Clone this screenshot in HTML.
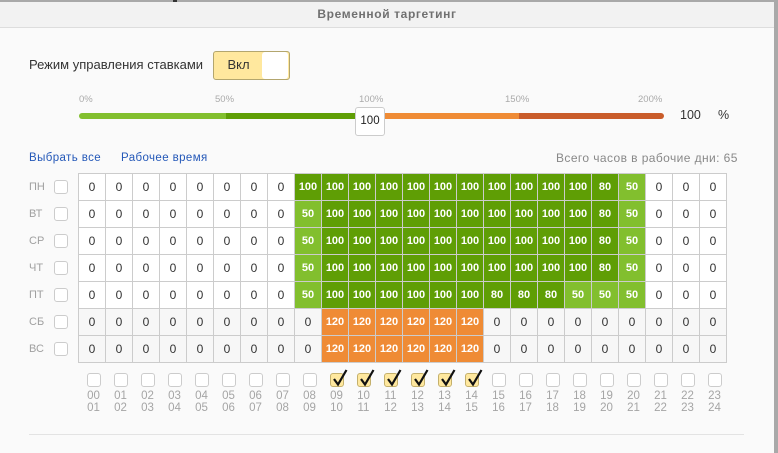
<!DOCTYPE html>
<html lang="ru"><head><meta charset="utf-8"><title>Временной таргетинг</title>
<style>
html,body{margin:0;padding:0}
body{width:778px;height:453px;overflow:hidden;position:relative;background:#a9a9a9;font-family:"Liberation Sans",Arial,sans-serif}
div,span,a{position:absolute;display:block;white-space:nowrap}
#m{left:0;top:2px;width:774px;height:451px;background:#fafafa}
#h{left:0;top:2px;width:774px;height:25px;background:#f2f2f2;border-bottom:1px solid #ddd;text-align:center;font:bold 12px/25px "Liberation Sans",sans-serif;color:#707070;letter-spacing:.62px}
.pl{top:94px;font-size:9.5px;line-height:11px;color:#aaa}
.seg{top:113px;height:6px}
table{position:absolute;left:78px;top:173px;border-collapse:collapse;table-layout:fixed;width:649px}
td{width:26px;height:26px;padding:0;border:1px solid #ccc;background:#fff;text-align:center;font:normal 12px/26px "Liberation Sans",sans-serif;color:#333}
tr.w td{background:#f7f7f7}
td.l,tr.w td.l{background:#82bf2e;color:#fff;font:bold 11px/26px "Liberation Sans",sans-serif}
td.g,tr.w td.g{background:#5f9e05;color:#fff;font:bold 11px/26px "Liberation Sans",sans-serif}
td.o,tr.w td.o{background:#ef8b35;color:#fff;font:bold 11px/26px "Liberation Sans",sans-serif}
.dl{left:29px;font-size:11px;line-height:13px;color:#a0a0a0}
.cb{width:12px;height:12px;border:1px solid #ccc;border-radius:3px;background:#fff}
.c{background:#ffe89e;border-color:#c4b06c}
.hl{width:27px;text-align:center;font-size:11.500px;line-height:12px;color:#a5a5a5;top:390px;white-space:normal}
svg{position:absolute;overflow:visible}
</style></head><body>
<div style="left:173px;top:0;width:4px;height:2px;background:#333"></div>
<div id="m"></div>
<div id="h">Временной таргетинг</div>

<div style="left:29px;top:57px;font-size:13px;line-height:15px;color:#333">Режим управления ставками</div>
<div style="left:213px;top:51px;width:75px;height:27px;border:1px solid #b3a66e;border-radius:3px;background:#ffe89e"></div>
<div style="left:215px;top:51px;width:47px;height:27px;text-align:center;font-size:13px;line-height:27px;color:#333">Вкл</div>
<div style="left:262px;top:52px;width:26px;height:27px;background:#fff;border-radius:3px"></div>

<div class="pl" style="left:79px">0%</div>
<div class="pl" style="left:215px">50%</div>
<div class="pl" style="left:359px">100%</div>
<div class="pl" style="left:505px">150%</div>
<div class="pl" style="left:638px">200%</div>
<div class="seg" style="left:79px;width:147px;background:#82bf2e;border-radius:3px 0 0 3px"></div>
<div class="seg" style="left:226px;width:144px;background:#5f9e05"></div>
<div class="seg" style="left:370px;width:149px;background:#ef8b35"></div>
<div class="seg" style="left:519px;width:145px;background:#c95c2a;border-radius:0 3px 3px 0"></div>
<div style="left:355px;top:107px;width:28px;height:27px;background:#fff;border:1px solid #ccc;border-radius:3px;text-align:center;font-size:11.500px;line-height:27px;color:#222">100</div>
<div style="left:680px;top:108px;font-size:12.500px;line-height:15px;color:#333">100</div>
<div style="left:718px;top:108px;font-size:12.500px;line-height:15px;color:#333">%</div>

<a style="left:29px;top:151px;font-size:11.500px;line-height:14px;color:#2458b8;letter-spacing:.4px">Выбрать все</a>
<a style="left:121px;top:151px;font-size:11.500px;line-height:14px;color:#2458b8;letter-spacing:.4px">Рабочее время</a>
<div style="left:556px;top:151px;font-size:12px;line-height:14px;color:#888;letter-spacing:.41px">Всего часов в рабочие дни: 65</div>

<div class="dl" style="top:181px">ПН</div><div class="cb" style="left:54px;top:180px"></div>
<div class="dl" style="top:208px">ВТ</div><div class="cb" style="left:54px;top:207px"></div>
<div class="dl" style="top:235px">СР</div><div class="cb" style="left:54px;top:234px"></div>
<div class="dl" style="top:262px">ЧТ</div><div class="cb" style="left:54px;top:261px"></div>
<div class="dl" style="top:289px">ПТ</div><div class="cb" style="left:54px;top:288px"></div>
<div class="dl" style="top:316px">СБ</div><div class="cb" style="left:54px;top:315px"></div>
<div class="dl" style="top:343px">ВС</div><div class="cb" style="left:54px;top:342px"></div>

<table>
<tr><td>0<td>0<td>0<td>0<td>0<td>0<td>0<td>0<td class=g>100<td class=g>100<td class=g>100<td class=g>100<td class=g>100<td class=g>100<td class=g>100<td class=g>100<td class=g>100<td class=g>100<td class=g>100<td class=g>80<td class=l>50<td>0<td>0<td>0</tr>
<tr><td>0<td>0<td>0<td>0<td>0<td>0<td>0<td>0<td class=l>50<td class=g>100<td class=g>100<td class=g>100<td class=g>100<td class=g>100<td class=g>100<td class=g>100<td class=g>100<td class=g>100<td class=g>100<td class=g>80<td class=l>50<td>0<td>0<td>0</tr>
<tr><td>0<td>0<td>0<td>0<td>0<td>0<td>0<td>0<td class=l>50<td class=g>100<td class=g>100<td class=g>100<td class=g>100<td class=g>100<td class=g>100<td class=g>100<td class=g>100<td class=g>100<td class=g>100<td class=g>80<td class=l>50<td>0<td>0<td>0</tr>
<tr><td>0<td>0<td>0<td>0<td>0<td>0<td>0<td>0<td class=l>50<td class=g>100<td class=g>100<td class=g>100<td class=g>100<td class=g>100<td class=g>100<td class=g>100<td class=g>100<td class=g>100<td class=g>100<td class=g>80<td class=l>50<td>0<td>0<td>0</tr>
<tr><td>0<td>0<td>0<td>0<td>0<td>0<td>0<td>0<td class=l>50<td class=g>100<td class=g>100<td class=g>100<td class=g>100<td class=g>100<td class=g>100<td class=g>80<td class=g>80<td class=g>80<td class=l>50<td class=l>50<td class=l>50<td>0<td>0<td>0</tr>
<tr class=w><td>0<td>0<td>0<td>0<td>0<td>0<td>0<td>0<td>0<td class=o>120<td class=o>120<td class=o>120<td class=o>120<td class=o>120<td class=o>120<td>0<td>0<td>0<td>0<td>0<td>0<td>0<td>0<td>0</tr>
<tr class=w><td>0<td>0<td>0<td>0<td>0<td>0<td>0<td>0<td>0<td class=o>120<td class=o>120<td class=o>120<td class=o>120<td class=o>120<td class=o>120<td>0<td>0<td>0<td>0<td>0<td>0<td>0<td>0<td>0</tr>
</table>

<div class="cb" style="left:87px;top:373px"></div><div class="hl" style="left:80px">00<br>01</div>
<div class="cb" style="left:114px;top:373px"></div><div class="hl" style="left:107px">01<br>02</div>
<div class="cb" style="left:141px;top:373px"></div><div class="hl" style="left:134px">02<br>03</div>
<div class="cb" style="left:168px;top:373px"></div><div class="hl" style="left:161px">03<br>04</div>
<div class="cb" style="left:195px;top:373px"></div><div class="hl" style="left:188px">04<br>05</div>
<div class="cb" style="left:222px;top:373px"></div><div class="hl" style="left:215px">05<br>06</div>
<div class="cb" style="left:249px;top:373px"></div><div class="hl" style="left:242px">06<br>07</div>
<div class="cb" style="left:276px;top:373px"></div><div class="hl" style="left:269px">07<br>08</div>
<div class="cb" style="left:303px;top:373px"></div><div class="hl" style="left:296px">08<br>09</div>
<div class="cb c" style="left:330px;top:373px"></div><div class="hl" style="left:323px">09<br>10</div>
<div class="cb c" style="left:357px;top:373px"></div><div class="hl" style="left:350px">10<br>11</div>
<div class="cb c" style="left:384px;top:373px"></div><div class="hl" style="left:377px">11<br>12</div>
<div class="cb c" style="left:411px;top:373px"></div><div class="hl" style="left:404px">12<br>13</div>
<div class="cb c" style="left:438px;top:373px"></div><div class="hl" style="left:431px">13<br>14</div>
<div class="cb c" style="left:465px;top:373px"></div><div class="hl" style="left:458px">14<br>15</div>
<div class="cb" style="left:492px;top:373px"></div><div class="hl" style="left:485px">15<br>16</div>
<div class="cb" style="left:519px;top:373px"></div><div class="hl" style="left:512px">16<br>17</div>
<div class="cb" style="left:546px;top:373px"></div><div class="hl" style="left:539px">17<br>18</div>
<div class="cb" style="left:573px;top:373px"></div><div class="hl" style="left:566px">18<br>19</div>
<div class="cb" style="left:600px;top:373px"></div><div class="hl" style="left:593px">19<br>20</div>
<div class="cb" style="left:627px;top:373px"></div><div class="hl" style="left:620px">20<br>21</div>
<div class="cb" style="left:654px;top:373px"></div><div class="hl" style="left:647px">21<br>22</div>
<div class="cb" style="left:681px;top:373px"></div><div class="hl" style="left:674px">22<br>23</div>
<div class="cb" style="left:708px;top:373px"></div><div class="hl" style="left:701px">23<br>24</div>

<svg style="left:0;top:0" width="778" height="453" fill="none" stroke="#111" stroke-width="2.200">
<path d="M334 379l4 5.500 8.500-14.500"/>
<path d="M361 379l4 5.500 8.500-14.500"/>
<path d="M388 379l4 5.500 8.500-14.500"/>
<path d="M415 379l4 5.500 8.500-14.500"/>
<path d="M442 379l4 5.500 8.500-14.500"/>
<path d="M469 379l4 5.500 8.500-14.500"/>
</svg>

<div style="left:29px;top:434px;width:715px;height:1px;background:#e3e3e3"></div>
</body></html>
